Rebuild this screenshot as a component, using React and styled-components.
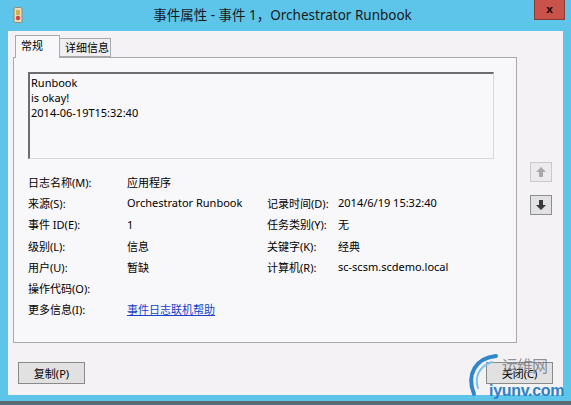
import React from "react";
import styled, { createGlobalStyle } from "styled-components";

const GlobalStyle = createGlobalStyle`
  html, body { margin: 0; padding: 0; background: #ffffff; }
  body { font-family: "Noto Sans", "Noto Sans CJK SC", sans-serif; }
`;

const ui = `"Noto Sans", "Noto Sans CJK SC", sans-serif`;

const Window = styled.div`
  position: relative;
  width: 571px;
  height: 405px;
  box-sizing: border-box;
  background: #5ec5ea;
  border-bottom: 4px solid #5a6a72;
  display: flex;
  flex-direction: column;
  overflow: hidden;
`;

const TitleBar = styled.div`
  height: 31px;
  display: flex;
  align-items: center;
  position: relative;
`;

const AppIcon = styled.svg`
  position: absolute;
  left: 13px;
  top: 7px;
`;

const Title = styled.div`
  flex: 1;
  text-align: center;
  font-family: ${ui};
  font-size: 13.5px;
  color: #1a1a1a;
  margin-top: -3px;
  padding-right: 6px;
`;

const CloseBtn = styled.div`
  position: absolute;
  right: 6px;
  top: 0;
  width: 29px;
  height: 19px;
  background: #c9524b;
  border: 1px solid #8c3a36;
  border-top: none;
  display: flex;
  align-items: center;
  justify-content: center;
  font-family: "DejaVu Sans", sans-serif;
  font-weight: bold;
  font-size: 11px;
  color: #2a1010;
`;

const Client = styled.div`
  margin: 0 8px;
  height: 364px;
  background: #f4f2f5;
  box-sizing: border-box;
  padding: 4px 10px 11px 5px;
  display: flex;
  flex-direction: column;
  font-family: ${ui};
  font-size: 11px;
  color: #000;
`;

const Body = styled.div`
  display: flex;
  gap: 13px;
`;

const TabArea = styled.div`
  width: 504px;
  display: flex;
  flex-direction: column;
`;

const TabStrip = styled.div`
  display: flex;
  align-items: flex-end;
  height: 22px;
  padding-left: 2px;
  position: relative;
  z-index: 1;
`;

const Tab = styled.div`
  box-sizing: border-box;
  height: ${(p) => (p.$active ? "23px" : "19px")};
  width: ${(p) => (p.$active ? "45px" : "52px")};
  padding: ${(p) => (p.$active ? "2px 0 0 5px" : "1px 0 0 5px")};
  border: 1px solid #a9a9a9;
  border-bottom: ${(p) => (p.$active ? "none" : "1px solid #a9a9a9")};
  background: ${(p) => (p.$active ? "#f8f7f9" : "#efeef0")};
  margin-bottom: ${(p) => (p.$active ? "-1px" : "0")};
  margin-left: ${(p) => (p.$active ? "0" : "-1px")};
  line-height: 16px;
`;

const Panel = styled.div`
  height: 286px;
  box-sizing: border-box;
  border: 1px solid #a9a9a9;
  background: #f8f7f9;
  padding: 14px 22px 0 14px;
`;

const TextBox = styled.div`
  height: 87px;
  box-sizing: border-box;
  border-top: 2px solid #6d6d6d;
  border-left: 2px solid #6d6d6d;
  border-right: 1px solid #d8d8d8;
  border-bottom: 1px solid #d8d8d8;
  padding: 1px 1px;
  line-height: 15px;
  font-size: 11px;
  white-space: pre;
`;

const Fields = styled.div`
  margin-top: 12px;
  display: grid;
  grid-template-columns: 99px 140px 71px 1fr;
  grid-auto-rows: 21.3px;
  align-items: center;
`;

const Cell = styled.div`
  white-space: nowrap;
`;

const Link = styled.a`
  color: #1a3fc9;
  text-decoration: underline;
  cursor: pointer;
`;

const Side = styled.div`
  display: flex;
  flex-direction: column;
  gap: 13px;
  padding-top: 127px;
`;

const ArrowBtn = styled.div`
  width: 22px;
  height: 20px;
  box-sizing: border-box;
  border: 1px solid ${(p) => (p.$disabled ? "#c9c9c9" : "#8e8e8e")};
  background: ${(p) => (p.$disabled ? "#eceaed" : "#e2e1e3")};
  display: flex;
  align-items: center;
  justify-content: center;
`;

const Footer = styled.div`
  margin-top: auto;
  display: flex;
  justify-content: space-between;
  padding-left: 5px;
`;

const Button = styled.div`
  width: 67px;
  height: 22px;
  box-sizing: border-box;
  border: 1px solid #8a8a8a;
  background: #e1e1e1;
  display: flex;
  align-items: center;
  justify-content: center;
`;

const Watermark = styled.div`
  position: absolute;
  left: 462px;
  top: 350px;
  width: 108px;
  height: 55px;
  pointer-events: none;
`;

const WmCn = styled.div`
  position: absolute;
  left: 40px;
  top: 3px;
  font-family: "Noto Sans CJK SC", sans-serif;
  font-size: 16px;
  color: rgba(110, 110, 120, 0.75);
  letter-spacing: -1px;
`;

const WmEn = styled.div`
  position: absolute;
  left: 27px;
  top: 32px;
  font-family: "Liberation Sans", Arial, sans-serif;
  font-weight: bold;
  font-size: 16px;
  color: #2f7fc4;
  letter-spacing: -0.3px;
`;

const UpArrow = ({ color }) => (
  <svg width="12" height="12" viewBox="0 0 12 12">
    <path d="M6 1 L11 6 L8 6 L8 11 L4 11 L4 6 L1 6 Z" fill={color} />
  </svg>
);

const DownArrow = ({ color }) => (
  <svg width="12" height="12" viewBox="0 0 12 12">
    <path d="M6 11 L11 6 L8 6 L8 1 L4 1 L4 6 L1 6 Z" fill={color} />
  </svg>
);

const rows = [
  ["日志名称(M):", "应用程序", "", ""],
  ["来源(S):", "Orchestrator Runbook", "记录时间(D):", "2014/6/19 15:32:40"],
  ["事件 ID(E):", "1", "任务类别(Y):", "无"],
  ["级别(L):", "信息", "关键字(K):", "经典"],
  ["用户(U):", "暂缺", "计算机(R):", "sc-scsm.scdemo.local"],
  ["操作代码(O):", "", "", ""],
];

export default function App() {
  return (
    <>
      <GlobalStyle />
      <Window>
        <TitleBar>
          <AppIcon width="10" height="16" viewBox="0 0 10 16">
            <rect x="1" y="0.5" width="8" height="15" rx="1.5" fill="#e9dcc0" stroke="#9b8a6a" />
            <rect x="3" y="3" width="4" height="5" fill="#d9b04a" />
            <circle cx="5" cy="11" r="2.2" fill="#d2443a" />
          </AppIcon>
          <Title>事件属性 - 事件 1，Orchestrator Runbook</Title>
          <CloseBtn>x</CloseBtn>
        </TitleBar>
        <Client>
          <Body>
            <TabArea>
              <TabStrip>
                <Tab $active>常规</Tab>
                <Tab>详细信息</Tab>
              </TabStrip>
              <Panel>
                <TextBox>{"Runbook\nis okay!\n2014-06-19T15:32:40"}</TextBox>
                <Fields>
                  {rows.map((r, i) =>
                    r.map((c, j) => <Cell key={`${i}-${j}`}>{c}</Cell>)
                  )}
                  <Cell>更多信息(I):</Cell>
                  <Cell>
                    <Link>事件日志联机帮助</Link>
                  </Cell>
                </Fields>
              </Panel>
            </TabArea>
            <Side>
              <ArrowBtn $disabled>
                <UpArrow color="#a9a9a9" />
              </ArrowBtn>
              <ArrowBtn>
                <DownArrow color="#3a3a3a" />
              </ArrowBtn>
            </Side>
          </Body>
          <Footer>
            <Button>复制(P)</Button>
            <Button>关闭(C)</Button>
          </Footer>
        </Client>
        <Watermark>
          <svg width="40" height="55" viewBox="0 0 40 55" style={{ position: "absolute", left: 0, top: 0 }}>
            <path d="M34 6 C14 8 4 24 12 44" stroke="#2f86c8" strokeWidth="4" fill="none" strokeLinecap="round" />
            <path d="M30 12 C18 16 12 26 16 38" stroke="#7fc0e8" strokeWidth="2" fill="none" strokeLinecap="round" />
          </svg>
          <WmCn>运维网</WmCn>
          <WmEn>iyunv.com</WmEn>
        </Watermark>
      </Window>
    </>
  );
}
